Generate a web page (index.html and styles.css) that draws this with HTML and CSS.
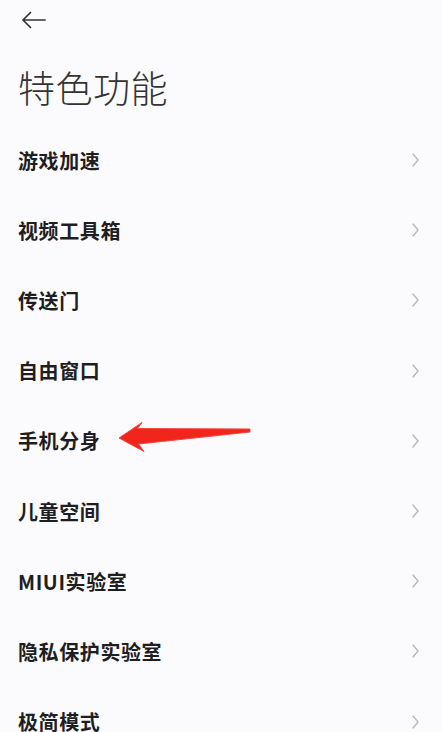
FILE: index.html
```html
<!DOCTYPE html>
<html lang="zh">
<head>
<meta charset="utf-8">
<link rel="stylesheet" href="styles.css">
</head>
<body>
<div class="page">
  <header class="header">
    <div class="back">
      <svg width="26" height="18" viewBox="0 0 26 18"><path d="M24 9H2M9.5 1.5L2 9l7.5 7.5" fill="none" stroke="#333" stroke-width="1.7" stroke-linecap="round" stroke-linejoin="round"/></svg>
    </div>
    <h1 class="title">特色功能</h1>
  </header>
  <ul class="list">
    <li class="row"><span class="label">游戏加速</span><span class="chev"><svg width="7" height="14" viewBox="0 0 7 14"><path d="M1 1l5 6-5 6" fill="none" stroke="#b9b9bd" stroke-width="1.4" stroke-linecap="round" stroke-linejoin="round"/></svg></span></li>
    <li class="row"><span class="label">视频工具箱</span><span class="chev"><svg width="7" height="14" viewBox="0 0 7 14"><path d="M1 1l5 6-5 6" fill="none" stroke="#b9b9bd" stroke-width="1.4" stroke-linecap="round" stroke-linejoin="round"/></svg></span></li>
    <li class="row"><span class="label">传送门</span><span class="chev"><svg width="7" height="14" viewBox="0 0 7 14"><path d="M1 1l5 6-5 6" fill="none" stroke="#b9b9bd" stroke-width="1.4" stroke-linecap="round" stroke-linejoin="round"/></svg></span></li>
    <li class="row"><span class="label">自由窗口</span><span class="chev"><svg width="7" height="14" viewBox="0 0 7 14"><path d="M1 1l5 6-5 6" fill="none" stroke="#b9b9bd" stroke-width="1.4" stroke-linecap="round" stroke-linejoin="round"/></svg></span></li>
    <li class="row marked"><span class="label">手机分身</span>
      <svg class="pointer" width="140" height="32" viewBox="0 0 140 32"><path d="M3 16 L26 0.5 L21.5 6.5 L134 7 L134 10 L22.5 22 L28 29.5 Z" fill="#f0261c" stroke="#f4463a" stroke-width="1" stroke-linejoin="round"/></svg>
      <span class="chev"><svg width="7" height="14" viewBox="0 0 7 14"><path d="M1 1l5 6-5 6" fill="none" stroke="#b9b9bd" stroke-width="1.4" stroke-linecap="round" stroke-linejoin="round"/></svg></span></li>
    <li class="row"><span class="label">儿童空间</span><span class="chev"><svg width="7" height="14" viewBox="0 0 7 14"><path d="M1 1l5 6-5 6" fill="none" stroke="#b9b9bd" stroke-width="1.4" stroke-linecap="round" stroke-linejoin="round"/></svg></span></li>
    <li class="row"><span class="label">MIUI实验室</span><span class="chev"><svg width="7" height="14" viewBox="0 0 7 14"><path d="M1 1l5 6-5 6" fill="none" stroke="#b9b9bd" stroke-width="1.4" stroke-linecap="round" stroke-linejoin="round"/></svg></span></li>
    <li class="row"><span class="label">隐私保护实验室</span><span class="chev"><svg width="7" height="14" viewBox="0 0 7 14"><path d="M1 1l5 6-5 6" fill="none" stroke="#b9b9bd" stroke-width="1.4" stroke-linecap="round" stroke-linejoin="round"/></svg></span></li>
    <li class="row"><span class="label">极简模式</span><span class="chev"><svg width="7" height="14" viewBox="0 0 7 14"><path d="M1 1l5 6-5 6" fill="none" stroke="#b9b9bd" stroke-width="1.4" stroke-linecap="round" stroke-linejoin="round"/></svg></span></li>
  </ul>
</div>
</body>
</html>
```
FILE: styles.css
```css
html, body {
  margin: 0;
  padding: 0;
  background: #fbfbfd;
}
body {
  font-family: "Noto Sans CJK SC", "Noto Sans", sans-serif;
  color: #222;
  overflow: hidden;
}
.page {
  width: 442px;
  height: 732px;
  overflow: hidden;
}
.header {
  height: 125px;
  display: flex;
  flex-direction: column;
  padding-left: 21px;
  box-sizing: border-box;
}
.back {
  margin-top: 11px;
  height: 18px;
  display: flex;
}
.title {
  margin: 36px 0 0 -3px;
  font-size: 37px;
  line-height: 44px;
  font-weight: 300;
  color: #333;
  letter-spacing: 0.5px;
}
.list {
  list-style: none;
  margin: 0;
  padding: 0;
}
.row {
  height: 70.2px;
  display: flex;
  align-items: center;
  padding: 0 23px 0 18px;
  position: relative;
}
.label {
  font-size: 20px;
  font-weight: 700;
  color: #1e1e22;
  letter-spacing: 0.6px;
}
.chev {
  margin-left: auto;
  display: flex;
}
.pointer {
  position: absolute;
  left: 116px;
  top: 16px;
}
```
